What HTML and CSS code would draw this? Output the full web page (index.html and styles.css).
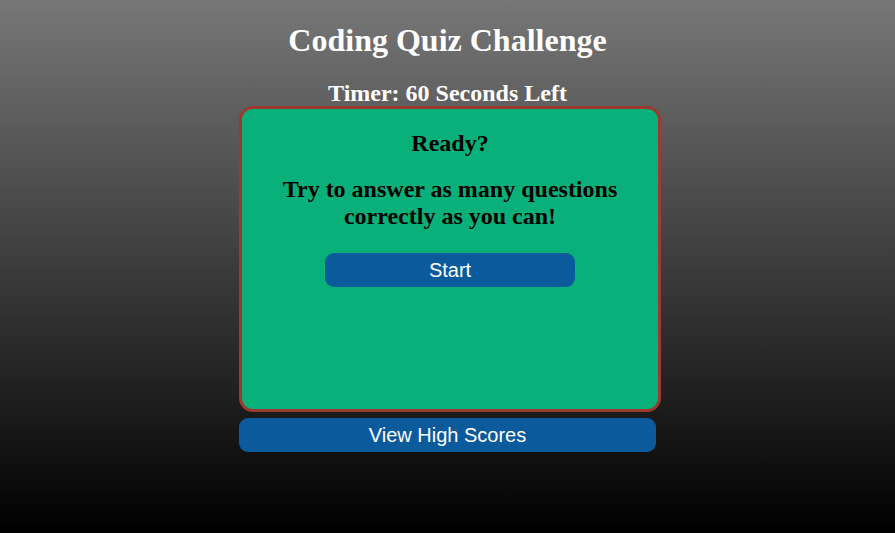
FILE: index.html
```html
<!DOCTYPE html>
<html>
<head>
<meta charset="utf-8">
<link rel="stylesheet" href="styles.css">
</head>
<body>
<header class="header">
  <h1 class="title">Coding Quiz Challenge</h1>
  <h2 class="timer">Timer: 60 Seconds Left</h2>
</header>
<main class="wrap">
  <section class="card">
    <h2 class="ready">Ready?</h2>
    <h2 class="intro">Try to answer as many questions correctly as you can!</h2>
    <button class="btn start">Start</button>
  </section>
  <button class="btn scores">View High Scores</button>
</main>
</body>
</html>
```
FILE: styles.css
```css
html, body {
  margin: 0;
  height: 100%;
}
body {
  background: linear-gradient(to bottom, #777777 0%, #000000 100%);
  font-family: "Liberation Serif", "Times New Roman", serif;
  color: #fff;
}
.header {
  text-align: center;
  padding-top: 22px;
}
.title {
  margin: 0;
  font-size: 32px;
  line-height: 37px;
  font-weight: bold;
}
.timer {
  margin: 21px 0 0;
  font-size: 24px;
  line-height: 26px;
}
.wrap {
  width: 417px;
  margin: 0 auto;
  display: flex;
  flex-direction: column;
  align-items: flex-start;
}
.card {
  box-sizing: border-box;
  width: 422px;
  height: 306px;
  background: #0ab07a;
  border: 3px solid #9c3a30;
  border-radius: 14px;
  color: #000;
  text-align: center;
  padding: 20px 20px 0;
  display: flex;
  flex-direction: column;
  align-items: center;
}
.ready {
  margin: 0;
  font-size: 24px;
  line-height: 28px;
}
.intro {
  margin: 19px 0 0;
  font-size: 24px;
  line-height: 27px;
}
.btn {
  font-family: "Liberation Sans", Arial, sans-serif;
  font-size: 20px;
  color: #fff;
  background: #0a5a9c;
  border: none;
  border-radius: 9px;
  height: 34px;
  padding: 0;
}
.start {
  width: 250px;
  margin-top: 23px;
}
.scores {
  width: 417px;
  margin-top: 6px;
}
```
